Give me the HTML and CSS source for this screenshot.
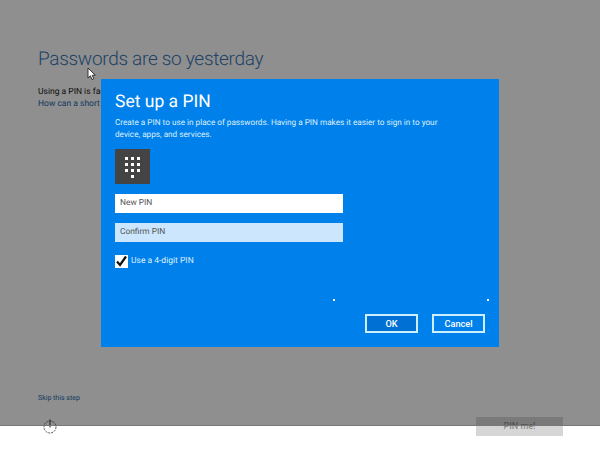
FILE: index.html
```html
<!DOCTYPE html>
<html lang="en">
<head>
<meta charset="utf-8">
<title>Set up a PIN</title>
<link rel="stylesheet" href="styles.css">
</head>
<body>
<div class="page">
  <main class="intro">
    <h1 class="intro-title">Passwords are so yesterday</h1>
    <p class="intro-text">Using a PIN is faster and more secure.<br><a class="intro-link">How can a short PIN be safer?</a></p>
  </main>
  <footer class="foot">
    <a class="skip">Skip this step</a>
    <div class="foot-row">
      <svg class="access" viewBox="0 0 24 24" width="24" height="24" aria-hidden="true">
        <circle cx="11" cy="12" r="6" fill="none" stroke="#555" stroke-width="1" stroke-dasharray="2 1"/>
        <path d="M11 4.500v8M14 10.500h6" fill="none" stroke="#444" stroke-width="1.200"/>
      </svg>
      <button class="pin-me">PIN me!</button>
    </div>
  </footer>
  <div class="scrim"></div>
  <svg class="cursor" viewBox="0 0 10 14" width="10" height="14" aria-hidden="true">
    <path d="M1 1v10l2.400-2.200L5 12.500l1.800-.8-1.600-3.500H8.300z" fill="#fff" stroke="#222" stroke-width=".9"/>
  </svg>
  <section class="dialog">
    <h2 class="dialog-title">Set up a PIN</h2>
    <p class="dialog-text">Create a PIN to use in place of passwords. Having a PIN makes it easier to sign in to your device, apps, and services.</p>
    <div class="pad-tile">
      <svg viewBox="0 0 18 21" width="18" height="21" aria-hidden="true">
        <g fill="#fff">
          <rect x="0" y="0" width="3" height="3"/><rect x="6" y="0" width="3" height="3"/><rect x="12" y="0" width="3" height="3"/>
          <rect x="0" y="6" width="3" height="3"/><rect x="6" y="6" width="3" height="3"/><rect x="12" y="6" width="3" height="3"/>
          <rect x="0" y="12" width="3" height="3"/><rect x="6" y="12" width="3" height="3"/><rect x="12" y="12" width="3" height="3"/>
          <rect x="6" y="18" width="3" height="3"/>
        </g>
      </svg>
    </div>
    <div class="field field-new">New PIN</div>
    <div class="field field-confirm">Confirm PIN</div>
    <label class="check-row">
      <span class="check-box">
        <svg viewBox="0 0 13 13" width="13" height="13" aria-hidden="true"><path d="M2 6.500l3 3.500 6-8.500" fill="none" stroke="#111" stroke-width="2.200"/></svg>
      </span>
      <span>Use a 4-digit PIN</span>
    </label>
    <div class="actions">
      <button class="btn btn-ok">OK</button>
      <button class="btn">Cancel</button>
    </div>
    <i class="speck speck-a"></i>
    <i class="speck speck-b"></i>
  </section>
</div>
</body>
</html>
```
FILE: styles.css
```css
* { box-sizing: border-box; }
html, body { margin: 0; padding: 0; }
body {
  background: #fff;
  font-family: Roboto, "Open Sans", sans-serif;
  text-rendering: geometricPrecision;
}
.page {
  position: relative;
  width: 600px;
  height: 450px;
  overflow: hidden;
  display: flex;
  flex-direction: column;
  justify-content: space-between;
  padding: 45px 37px 14px 38px;
  background: #fff;
}
.intro-title {
  margin: 0;
  font-size: 19px;
  letter-spacing: -0.3px;
  line-height: 28px;
  font-weight: 300;
  color: #2a6cb0;
}
.intro-text {
  margin: 13px 0 0;
  font-size: 8.500px;
  line-height: 12px;
  color: #000;
}
.intro-link { color: #0a5aa5; }
.foot { display: flex; flex-direction: column; }
.skip { font-size: 7px; line-height: 12px; color: #0a5aa5; }
.foot-row {
  display: flex;
  justify-content: space-between;
  align-items: center;
  height: 19px;
  margin-top: 13px;
}
.access { margin-left: 1px; }
.pin-me {
  width: 87px;
  height: 19px;
  padding: 0;
  border: 0;
  background: #d6d6d6;
  color: #8a8a8a;
  font: 500 9px/19px Roboto, sans-serif;
}
.scrim {
  position: absolute;
  left: 0;
  right: 0;
  top: 0;
  height: 426px;
  background: rgba(20, 20, 20, 0.48);
  border-bottom: 1px solid #777;
}
.cursor { position: absolute; left: 87px; top: 67px; }
.dialog {
  position: absolute;
  left: 101px;
  top: 79px;
  width: 398px;
  height: 268px;
  padding: 13px 14px 0;
  background: #0080ea;
  color: #fff;
  display: flex;
  flex-direction: column;
}
.dialog-title {
  margin: 0;
  font-size: 17.500px;
  line-height: 20px;
  font-weight: 400;
}
.dialog-text {
  margin: 5px 0 0;
  width: 345px;
  font-size: 8.200px;
  line-height: 12px;
  color: #dff1ff;
}
.pad-tile {
  width: 35px;
  height: 35px;
  margin-top: 8px;
  padding: 8px 0 0 10px;
  background: #444;
  display: flex;
  align-items: flex-start;
}
.field {
  width: 228px;
  height: 19px;
  padding-left: 5px;
  color: #555;
  font-size: 8.400px;
  line-height: 19px;
}
.field-new { margin-top: 10px; background: #fff; }
.field-confirm { margin-top: 10px; background: #cbe6fd; }
.check-row {
  display: flex;
  align-items: center;
  gap: 3px;
  margin-top: 13px;
  font-size: 8.500px;
  line-height: 13px;
  color: #dff1ff;
}
.check-box {
  width: 13px;
  height: 13px;
  background: #fff;
  display: block;
}
.check-box svg { display: block; }
.actions {
  display: flex;
  justify-content: flex-end;
  gap: 14px;
  margin: 46px 0 0;
}
.btn {
  width: 53px;
  height: 19px;
  padding: 0;
  border: 2px solid #cdeefc;
  background: #0080ea;
  color: #fff;
  font: 500 9.200px/15px Roboto, sans-serif;
}
.btn-ok { background: #0070d4; }
.speck {
  position: absolute;
  top: 220px;
  width: 2px;
  height: 2px;
  background: #fff;
}
.speck-a { left: 232px; }
.speck-b { left: 386px; }
```
